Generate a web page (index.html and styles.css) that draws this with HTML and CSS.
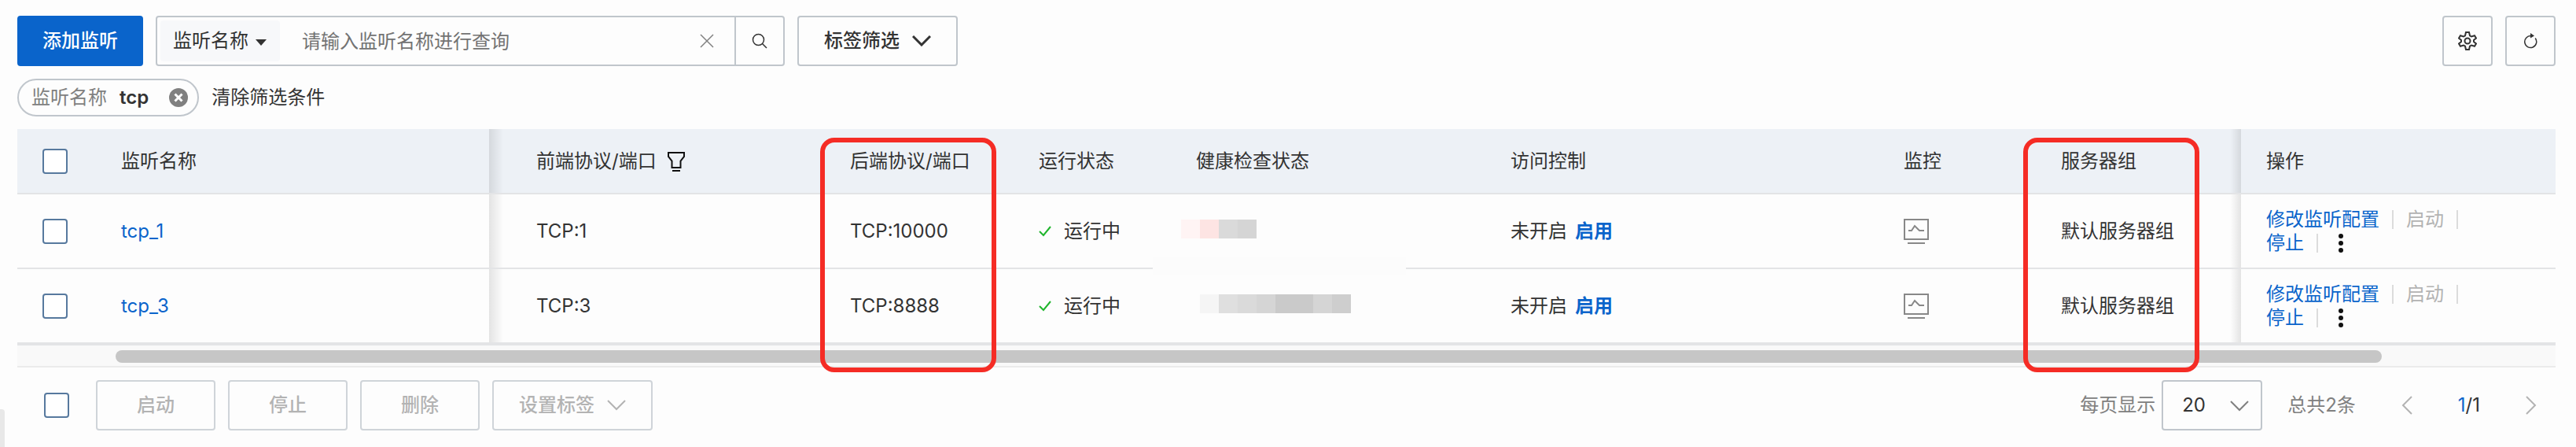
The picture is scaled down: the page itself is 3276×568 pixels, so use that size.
FILE: index.html
```html
<!DOCTYPE html>
<html lang="zh-CN">
<head>
    <meta charset="UTF-8">
    <meta name="viewport" content="width=device-width, initial-scale=1.0">
    <title>监听</title>
    <link rel="stylesheet" href="styles.css">
</head>
<body>
    <div class="page">
        <div class="toolbar">
            <button class="btn btn-primary" type="button">添加监听</button>
            <form class="search" role="search">
                <div class="search-field">
                    <select class="search-select" aria-label="查询字段">
                        <option>监听名称</option>
                    </select>
                    <svg class="caret" width="14" height="8" viewBox="0 0 14 8"><path d="M0 0h14L7 8z" fill="#333"/></svg>
                </div>
                <input class="search-input" type="text" aria-label="监听名称" placeholder="请输入监听名称进行查询">
                <button class="search-clear" type="button" aria-label="清空">
                    <svg width="18" height="18" viewBox="0 0 18 18"><path d="M1 1l16 16M17 1L1 17" stroke="#808080" stroke-width="1.5" fill="none"/></svg>
                </button>
                <button class="search-submit" type="button" aria-label="搜索">
                    <svg width="20" height="20" viewBox="0 0 20 20"><circle cx="8.500" cy="8.500" r="7" stroke="#333" stroke-width="1.500" fill="none"/><path d="M13.500 13.500l5.500 5.500" stroke="#333" stroke-width="1.500"/></svg>
                </button>
            </form>
            <button class="btn btn-filter" type="button">标签筛选
                <svg width="24" height="14" viewBox="0 0 24 14"><path d="M1 1l11 11L23 1" stroke="#333" stroke-width="3" fill="none"/></svg>
            </button>
            <div class="toolbar-right">
                <button class="btn btn-icon" type="button" aria-label="设置">
                    <svg width="24" height="24" viewBox="0 0 24 24" fill="none" stroke="#333" stroke-width="2"><path d="M10 1h4l1 4.300 2 1.200 4-1.300 2 3.400-3 2.400v2l3 2.400-2 3.400-4-1.300-2 1.200-1 4.300h-4l-1-4.300-2-1.200-4 1.300-2-3.400 3-2.400v-2L1 8.600l2-3.400 4 1.300 2-1.200z"/><circle cx="12" cy="12" r="3.500"/></svg>
                </button>
                <button class="btn btn-icon" type="button" aria-label="刷新">
                    <svg width="18" height="20" viewBox="0 0 18 20"><path d="M15.200 6.500A7.500 7.500 0 1 1 10 3.600" stroke="#333" stroke-width="1.500" fill="none"/><path d="M9 0l5 3.500L9 6.500z" fill="#333"/></svg>
                </button>
            </div>
        </div>

        <div class="filters">
            <span class="tag">
                <span class="tag-key">监听名称</span>
                <strong class="tag-value">tcp</strong>
                <button class="tag-close" type="button" aria-label="移除">
                    <svg width="24" height="24" viewBox="0 0 24 24"><circle cx="12" cy="12" r="12" fill="#808080"/><path d="M7.500 7.500l9 9M16.500 7.500l-9 9" stroke="#fff" stroke-width="3"/></svg>
                </button>
            </span>
            <a class="filters-clear" href="#">清除筛选条件</a>
        </div>

        <table class="table">
            <colgroup>
                <col class="col-check">
                <col class="col-name">
                <col class="col-front">
                <col class="col-back">
                <col class="col-status">
                <col class="col-health">
                <col class="col-acl">
                <col class="col-monitor">
                <col class="col-group">
                <col class="col-actions">
            </colgroup>
            <thead>
                <tr>
                    <th><input class="checkbox" type="checkbox" aria-label="全选"></th>
                    <th>监听名称</th>
                    <th class="after-fixed">前端协议/端口
                        <svg class="icon-filter" width="22" height="25" viewBox="0 0 22 25"><path d="M1 1h20v5l-4.500 5.500V20h-11v-8.500L1 6z" stroke="#111" stroke-width="2" fill="none"/><path d="M6 24h10" stroke="#111" stroke-width="2"/></svg>
                    </th>
                    <th class="marked">后端协议/端口<span class="mark mark-back"></span></th>
                    <th>运行状态</th>
                    <th>健康检查状态</th>
                    <th>访问控制</th>
                    <th>监控</th>
                    <th class="before-fixed marked">服务器组<span class="mark mark-group"></span></th>
                    <th>操作</th>
                </tr>
            </thead>
            <tbody>
                <tr>
                    <td><input class="checkbox" type="checkbox" aria-label="tcp_1"></td>
                    <td><a href="#">tcp_1</a></td>
                    <td class="after-fixed">TCP:1</td>
                    <td>TCP:10000</td>
                    <td>
                        <span class="status"><svg width="16" height="14" viewBox="0 0 16 14"><path d="M1 7l5 5L15 1" stroke="#1fb52c" stroke-width="2" fill="none"/></svg>运行中</span>
                    </td>
                    <td class="health">
                        <div class="mosaic"><i></i><i class="p1"></i><i class="p2"></i><i class="p5"></i><i class="p6"></i></div>
                        <div class="mosaic-gap"></div>
                    </td>
                    <td><span class="acl">未开启<a href="#">启用</a></span></td>
                    <td>
                        <svg width="32" height="32" viewBox="0 0 32 32" fill="none" stroke="#888" stroke-width="2"><path d="M1 1h30v25H1zM5 31h22M6 15h4l4-6 6 6h6"/></svg>
                    </td>
                    <td class="before-fixed">默认服务器组</td>
                    <td>
                        <div class="action-line"><a href="#">修改监听配置</a><span class="disabled">启动</span><span class="end"></span></div>
                        <div class="action-line"><a href="#">停止</a><button class="more" type="button" aria-label="更多"><svg width="6" height="24" viewBox="0 0 6 24" fill="#111"><circle cx="3" cy="3" r="3"/><circle cx="3" cy="12" r="3"/><circle cx="3" cy="21" r="3"/></svg></button></div>
                    </td>
                </tr>
                <tr>
                    <td><input class="checkbox" type="checkbox" aria-label="tcp_3"></td>
                    <td><a href="#">tcp_3</a></td>
                    <td class="after-fixed">TCP:3</td>
                    <td>TCP:8888</td>
                    <td>
                        <span class="status"><svg width="16" height="14" viewBox="0 0 16 14"><path d="M1 7l5 5L15 1" stroke="#1fb52c" stroke-width="2" fill="none"/></svg>运行中</span>
                    </td>
                    <td class="health">
                        <div class="mosaic"><i></i><i></i><i class="p3"></i><i class="p4"></i><i class="p5"></i><i class="p6"></i><i class="p7"></i><i class="p7"></i><i class="p6"></i><i class="p8"></i></div>
                    </td>
                    <td><span class="acl">未开启<a href="#">启用</a></span></td>
                    <td>
                        <svg width="32" height="32" viewBox="0 0 32 32" fill="none" stroke="#888" stroke-width="2"><path d="M1 1h30v25H1zM5 31h22M6 15h4l4-6 6 6h6"/></svg>
                    </td>
                    <td class="before-fixed">默认服务器组</td>
                    <td>
                        <div class="action-line"><a href="#">修改监听配置</a><span class="disabled">启动</span><span class="end"></span></div>
                        <div class="action-line"><a href="#">停止</a><button class="more" type="button" aria-label="更多"><svg width="6" height="24" viewBox="0 0 6 24" fill="#111"><circle cx="3" cy="3" r="3"/><circle cx="3" cy="12" r="3"/><circle cx="3" cy="21" r="3"/></svg></button></div>
                    </td>
                </tr>
            </tbody>
        </table>
        <div class="scrollbar"><div class="scrollbar-thumb"></div></div>

        <div class="footer">
            <input class="checkbox" type="checkbox" aria-label="全选">
            <div class="footer-buttons">
                <button class="btn" type="button" disabled>启动</button>
                <button class="btn" type="button" disabled>停止</button>
                <button class="btn" type="button" disabled>删除</button>
                <button class="btn btn-tags" type="button" disabled>设置标签
                    <svg width="24" height="14" viewBox="0 0 24 14"><path d="M1 1l11 11L23 1" stroke="#b3b3b3" stroke-width="2" fill="none"/></svg>
                </button>
            </div>
            <div class="pager">
                <label for="page-size">每页显示</label>
                <div class="page-size">
                    <select id="page-size">
                        <option>20</option>
                    </select>
                    <svg class="page-size-arrow" width="24" height="14" viewBox="0 0 24 14"><path d="M1 1l11 11L23 1" stroke="#808080" stroke-width="2" fill="none"/></svg>
                </div>
                <span class="total">总共2条</span>
                <button class="page-btn" type="button" aria-label="上一页">
                    <svg width="14" height="24" viewBox="0 0 14 24"><path d="M13 1L2 12l11 11" stroke="#b3b3b3" stroke-width="2" fill="none"/></svg>
                </button>
                <span class="page-no"><b>1</b>/1</span>
                <button class="page-btn" type="button" aria-label="下一页">
                    <svg width="14" height="24" viewBox="0 0 14 24"><path d="M1 1l11 11L1 23" stroke="#b3b3b3" stroke-width="2" fill="none"/></svg>
                </button>
            </div>
        </div>
    </div>
    <div class="side-handle"></div>
</body>
</html>
```
FILE: styles.css
```css
* {
    box-sizing: border-box;
}
body {
    margin: 0;
    background-color: #fdfdfd;
    color: #333;
    font-family: Inter, "Noto Sans CJK SC", sans-serif;
    font-size: 24px;
    line-height: 30px;
}
button, input, select {
    font: inherit;
    color: inherit;
    margin: 0;
}
button {
    padding: 0;
    border: none;
    background: none;
    cursor: pointer;
}
svg {
    display: block;
    flex: none;
}
a {
    color: #0a64cb;
    text-decoration: none;
}
.page {
    padding: 20px 26px 20px 22px;
}

/* toolbar */
.toolbar {
    display: flex;
    gap: 16px;
}
.toolbar-right {
    display: flex;
    gap: 16px;
    margin-left: auto;
}
.btn {
    display: flex;
    align-items: center;
    justify-content: center;
    gap: 16px;
    height: 64px;
    padding: 0 32px;
    border: 2px solid #c0c6cc;
    border-radius: 4px;
    font-weight: 500;
}
.btn-primary {
    border-color: #0a64cb;
    background-color: #0a64cb;
    color: #fff;
    padding: 0 30px;
}
.btn-filter {
    width: 204px;
}
.btn-icon {
    width: 64px;
    padding: 0;
}
.btn:disabled {
    min-width: 152px;
    border-color: #cfd4d9;
    color: #b3b3b3;
    cursor: not-allowed;
}
.search {
    display: flex;
    align-items: center;
    width: 800px;
    height: 64px;
    border: 2px solid #c0c6cc;
    border-radius: 4px;
}
.search-field {
    position: relative;
    width: 152px;
    margin-left: 4px;
    border-radius: 4px;
    background-color: #f7f8fa;
}
.search-select {
    display: block;
    appearance: none;
    width: 100%;
    height: 52px;
    padding: 0 16px;
    border: none;
    background: none;
}
.caret {
    position: absolute;
    right: 17px;
    top: 24px;
    pointer-events: none;
}
.search-input {
    flex: 1;
    min-width: 0;
    height: 60px;
    padding: 0 28px;
    border: none;
    outline: none;
    background: none;
}
.search-input::placeholder {
    color: #737373;
    opacity: 1;
}
.search-clear {
    margin-right: 26px;
}
.search-submit {
    display: flex;
    align-items: center;
    justify-content: center;
    width: 62px;
    height: 60px;
    border-left: 2px solid #c0c6cc;
}

/* active filters */
.filters {
    display: flex;
    align-items: center;
    gap: 16px;
    margin: 16px 0;
}
.tag {
    display: flex;
    align-items: center;
    height: 48px;
    padding: 0 12px 0 16px;
    border: 2px solid #c0c6cc;
    border-radius: 24px;
}
.tag-key {
    color: #808080;
}
.tag-value {
    margin: 0 26px 0 16px;
    font-weight: 600;
}
.filters-clear {
    color: #333;
}

/* table */
.table {
    width: 100%;
    table-layout: fixed;
    border-collapse: separate;
    border-spacing: 0;
    border-bottom: 2px solid #e3e4e6;
}
.col-check { width: 100px; }
.col-name { width: 500px; }
.col-front { width: 427px; }
.col-back { width: 240px; }
.col-status { width: 200px; }
.col-health { width: 400px; }
.col-acl { width: 500px; }
.col-monitor { width: 200px; }
.col-group { width: 261px; }
.col-actions { width: 400px; }
th, td {
    padding: 0 0 0 32px;
    border-bottom: 2px solid #e3e4e6;
    text-align: left;
    vertical-align: middle;
    white-space: nowrap;
}
th {
    height: 83px;
    background-color: #edf1f6;
    font-weight: 400;
}
td {
    height: 95px;
}
.after-fixed {
    padding-left: 60px;
    background-image: linear-gradient(to right, rgba(0, 0, 0, 0.1), rgba(0, 0, 0, 0));
    background-size: 18px 100%;
    background-repeat: no-repeat;
}
.before-fixed {
    background-image: linear-gradient(to left, rgba(0, 0, 0, 0.1), rgba(0, 0, 0, 0));
    background-size: 14px 100%;
    background-position: right top;
    background-repeat: no-repeat;
}
.checkbox {
    display: block;
    flex: none;
    appearance: none;
    width: 32px;
    height: 32px;
    border: 2px solid #57799e;
    border-radius: 4px;
    background-color: #fff;
}
.icon-filter {
    display: inline-block;
    margin-left: 8px;
    vertical-align: middle;
}
.status {
    display: flex;
    align-items: center;
    gap: 16px;
}
.acl {
    display: flex;
    gap: 10px;
}
.acl a {
    font-weight: 700;
}

/* red frames around a column */
.marked {
    position: relative;
}
.mark {
    position: absolute;
    top: 11px;
    z-index: 2;
    width: 224px;
    height: 298px;
    border: 6px solid #f52c25;
    border-radius: 18px;
    pointer-events: none;
}
.mark-back {
    left: -6px;
}
.mark-group {
    left: -16px;
}

/* masked health values */
.health {
    position: relative;
    padding-left: 0;
}
.mosaic {
    display: flex;
    margin-bottom: 6px;
}
.mosaic i {
    width: 24px;
    height: 24px;
}
.mosaic i:first-child { width: 13px; }
.mosaic .p1 { background-color: #fff4f4; }
.mosaic .p2 { background-color: #fde4e3; }
.mosaic .p3 { background-color: #f5f5f5; }
.mosaic .p4 { background-color: #dfdfdf; }
.mosaic .p5 { background-color: #dadada; }
.mosaic .p6 { background-color: #d5d5d5; }
.mosaic .p7 { background-color: #cacaca; }
.mosaic .p8 { background-color: #cecece; }
.mosaic-gap {
    position: absolute;
    left: -23px;
    bottom: -10px;
    z-index: 1;
    width: 322px;
    height: 24px;
    background-color: #fcfcfc;
}

/* row actions */
.action-line {
    display: flex;
    align-items: center;
    height: 30px;
}
.action-line > * + * {
    margin-left: 16px;
    padding-left: 16px;
    border-left: 2px solid #dcdcdc;
}
.action-line .disabled {
    line-height: 24px;
    color: #b3b3b3;
}
.action-line .end {
    height: 24px;
}
.action-line .more {
    padding-left: 26px;
}

.scrollbar {
    padding: 6px 221px 4px 125px;
    border-bottom: 2px solid #ebebeb;
    background-color: #f9f9f9;
}
.scrollbar-thumb {
    height: 16px;
    border-radius: 8px;
    background-color: #c6c6c6;
}

/* footer */
.footer {
    display: flex;
    align-items: center;
    margin-top: 16px;
    padding-left: 34px;
}
.footer-buttons {
    display: flex;
    gap: 16px;
    margin-left: 34px;
}
.btn-tags {
    width: 204px;
}
.pager {
    display: flex;
    align-items: center;
    margin-left: auto;
    padding-right: 24px;
    color: #808080;
}
.page-size {
    position: relative;
    margin: 0 32px 0 8px;
}
.page-size select {
    display: block;
    appearance: none;
    width: 128px;
    height: 64px;
    padding: 0 24px;
    border: 2px solid #c0c6cc;
    border-radius: 4px;
    background: none;
    color: #333;
}
.page-size-arrow {
    position: absolute;
    right: 17px;
    top: 26px;
    pointer-events: none;
}
.page-btn {
    margin-left: 58px;
}
.page-no {
    margin-left: 58px;
    color: #333;
}
.page-no b {
    color: #0a64cb;
    font-weight: 400;
}
.side-handle {
    position: fixed;
    left: 0;
    bottom: 0;
    width: 6px;
    height: 48px;
    border-top-right-radius: 4px;
    background-color: #e8e8e8;
}
```
